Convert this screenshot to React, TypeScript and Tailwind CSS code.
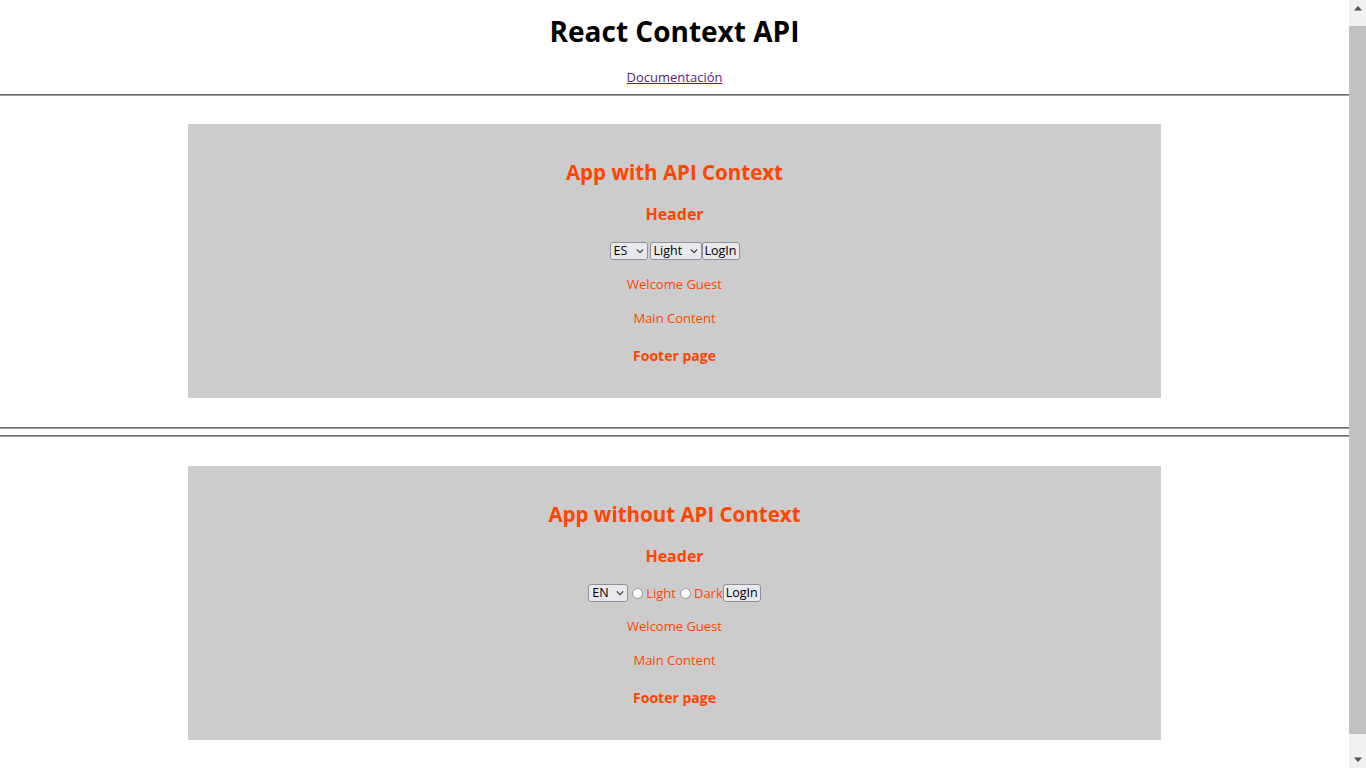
import { useState } from "react";

const font = { fontFamily: '"Open Sans", "Noto Sans", sans-serif' };

function Chevron() {
  return (
    <svg
      viewBox="0 0 10 6"
      className="pointer-events-none absolute right-[4px] top-1/2 -translate-y-1/2 w-[8px] h-[5px]"
      fill="none"
      stroke="#333"
      strokeWidth={1.4}
    >
      <path d="M1 1l4 4 4-4" />
    </svg>
  );
}

function Select({ options, width }: { options: string[]; width: string }) {
  return (
    <span className={`relative flex h-[18px] ${width}`}>
      <select className="appearance-none w-full h-[18px] pl-[3px] pr-[14px] text-[12.5px] leading-[16px] text-black bg-[#e9e9ed] border border-[#8f8f9d] rounded-[3px]">
        {options.map((o) => (
          <option key={o}>{o}</option>
        ))}
      </select>
      <Chevron />
    </span>
  );
}

function LoginButton() {
  return (
    <button
      type="button"
      className="h-[18px] px-[2px] text-[12.5px] leading-[16px] text-black bg-[#e9e9ed] border border-[#8f8f9d] rounded-[3px]"
    >
      LogIn
    </button>
  );
}

function Radio({ label, checked, onChange }: { label: string; checked: boolean; onChange: () => void }) {
  return (
    <label className="flex items-center ml-[4px]">
      <input
        type="radio"
        checked={checked}
        onChange={onChange}
        className="appearance-none w-[11px] h-[11px] rounded-full bg-white border border-[#8f8f9d] mr-[3px]"
      />
      <span className="text-[13px] leading-[18px] text-[#ff4500]">{label}</span>
    </label>
  );
}

function Hr() {
  return <div className="h-[2px] border-t border-b border-t-[#6a6a6a] border-b-[#9c9c9c]" />;
}

function AppBox({ title, withContext }: { title: string; withContext: boolean }) {
  const [theme, setTheme] = useState("");

  return (
    <div className="w-[973px] mx-auto bg-[#cccccc] pt-[33px] pb-[33px] flex flex-col items-center text-[#ff4500]">
      <h2 className="h-[30px] leading-[30px] text-[20.5px] font-bold">{title}</h2>
      <h3 className="mt-[15px] h-[24px] leading-[24px] text-[16px] font-bold">Header</h3>
      <div className="mt-[15px] h-[20px] flex items-center">
        {withContext ? (
          <>
            <Select options={["ES", "EN"]} width="w-[38px]" />
            <span className="w-[2px]" />
            <Select options={["Light", "Dark"]} width="w-[52px]" />
            <LoginButton />
          </>
        ) : (
          <>
            <Select options={["EN", "ES"]} width="w-[40px]" />
            <Radio label="Light" checked={theme === "light"} onChange={() => setTheme("light")} />
            <Radio label="Dark" checked={theme === "dark"} onChange={() => setTheme("dark")} />
            <LoginButton />
          </>
        )}
      </div>
      <p className="mt-[14px] h-[18px] leading-[18px] text-[13px]">Welcome Guest</p>
      <p className="mt-[16px] h-[18px] leading-[18px] text-[13px]">Main Content</p>
      <h4 className="mt-[20px] h-[18px] leading-[18px] text-[14px] font-bold">Footer page</h4>
    </div>
  );
}

function Scrollbar() {
  return (
    <div className="sticky top-0 w-[17px] h-[768px] shrink-0 bg-[#f1f1f1] flex flex-col">
      <div className="h-[17px] flex items-center justify-center">
        <svg viewBox="0 0 8 5" className="w-[8px] h-[5px]" fill="#505050">
          <path d="M4 0L8 4.5H0z" />
        </svg>
      </div>
      <div className="mt-[9px] mb-[17px] flex-1 bg-[#c1c1c1]" />
      <div className="h-[17px] flex items-center justify-center">
        <svg viewBox="0 0 8 5" className="w-[8px] h-[5px]" fill="#505050">
          <path d="M0 0.5H8L4 5z" />
        </svg>
      </div>
    </div>
  );
}

export default function App() {
  return (
    <div className="flex bg-white" style={font}>
      <div className="flex-1 min-h-[790px]">
        {/* Page title */}
        <h1 className="pt-[10px] h-[52px] leading-[42px] text-[28px] font-bold text-center text-black">
          React Context API
        </h1>
        <div className="mt-[16px] h-[18px] flex justify-center">
          <a href="#" className="text-[13px] leading-[18px] text-[#551a8b] underline">
            Documentación
          </a>
        </div>
        <div className="mt-[8px]">
          <Hr />
        </div>

        <div className="mt-[28px]">
          <AppBox title="App with API Context" withContext />
        </div>

        <div className="mt-[29px]">
          <Hr />
        </div>
        <div className="mt-[6px]">
          <Hr />
        </div>

        <div className="mt-[29px]">
          <AppBox title="App without API Context" withContext={false} />
        </div>
      </div>
      <Scrollbar />
    </div>
  );
}
